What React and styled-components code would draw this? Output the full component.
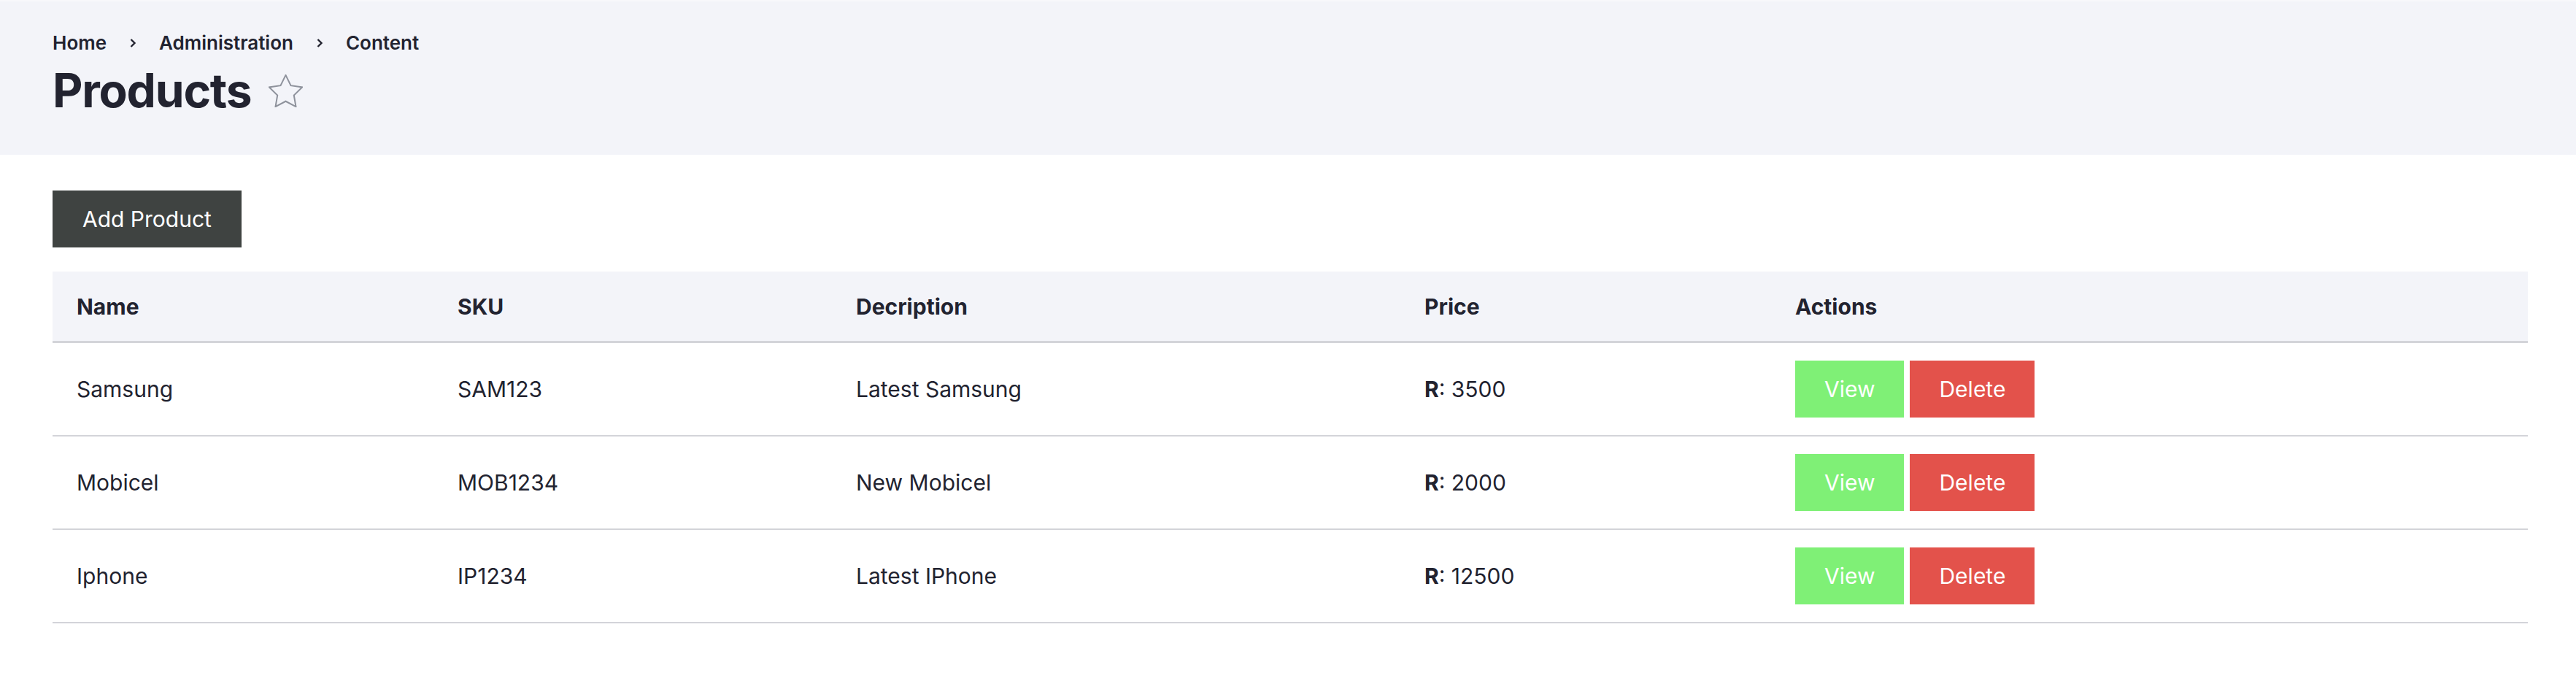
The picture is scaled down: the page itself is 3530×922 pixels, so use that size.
import styled, { createGlobalStyle } from "styled-components";

const GlobalStyle = createGlobalStyle`
  html, body {
    margin: 0;
    padding: 0;
    background: #ffffff;
    font-family: Inter, "Noto Sans", sans-serif;
    color: #222330;
  }
`;

const products = [
  { id: 1, name: "Samsung", sku: "SAM123", description: "Latest Samsung", price: 3500 },
  { id: 2, name: "Mobicel", sku: "MOB1234", description: "New Mobicel", price: 2000 },
  { id: 3, name: "Iphone", sku: "IP1234", description: "Latest IPhone", price: 12500 },
];

const columns = [
  { key: "name", label: "Name", width: 522 },
  { key: "sku", label: "SKU", width: 546 },
  { key: "description", label: "Decription", width: 779 },
  { key: "price", label: "Price", width: 508 },
  { key: "actions", label: "Actions", width: 1037 },
];

const crumbs = ["Home", "Administration", "Content"];

const Chevron = () => (
  <svg width="10" height="14" viewBox="0 0 10 14" fill="none">
    <path d="M2.5 2L7.5 7L2.5 12" stroke="#222330" strokeWidth="2.4" />
  </svg>
);

const Star = () => (
  <svg width="47" height="45" viewBox="1.6 1.6 20.8 19.8" preserveAspectRatio="none">
    <polygon
      points="12,2 15.09,8.26 22,9.27 17,14.14 18.18,21.02 12,17.77 5.82,21.02 7,14.14 2,9.27 8.91,8.26"
      fill="none"
      stroke="#8e929c"
      strokeWidth="2"
      vectorEffect="non-scaling-stroke"
      strokeLinejoin="miter"
    />
  </svg>
);

const ProductsPage = () => {
  return (
    <Page>
      <GlobalStyle />
      <PageHeader>
        <Breadcrumb>
          {crumbs.map((crumb, i) => (
            <Crumb key={crumb}>
              {crumb}
              {i < crumbs.length - 1 && (
                <Separator>
                  <Chevron />
                </Separator>
              )}
            </Crumb>
          ))}
        </Breadcrumb>
        <TitleRow>
          <Title>Products</Title>
          <Star />
        </TitleRow>
      </PageHeader>
      <Content>
        <PrimaryButton type="button">Add Product</PrimaryButton>
        <Table>
          <colgroup>
            {columns.map((col) => (
              <col key={col.key} width={col.width} />
            ))}
          </colgroup>
          <thead>
            <tr>
              {columns.map((col) => (
                <HeadCell key={col.key}>{col.label}</HeadCell>
              ))}
            </tr>
          </thead>
          <tbody>
            {products.map((p) => (
              <Row key={p.id}>
                <Cell>{p.name}</Cell>
                <Cell>{p.sku}</Cell>
                <Cell>{p.description}</Cell>
                <Cell>
                  <b>R</b>: {p.price}
                </Cell>
                <Cell>
                  <Actions>
                    <ActionButton $variant="view">View</ActionButton>
                    <ActionButton $variant="delete">Delete</ActionButton>
                  </Actions>
                </Cell>
              </Row>
            ))}
          </tbody>
        </Table>
      </Content>
    </Page>
  );
};

const Page = styled.div`
  width: 100%;
  min-height: 922px;
  background: #ffffff;
`;

const PageHeader = styled.header`
  background: #f3f4f9;
  border-top: 2px solid #f8f8fb;
  padding: 39px 72px 48px;
`;

const Breadcrumb = styled.nav`
  display: flex;
  align-items: center;
  height: 36px;
  margin-bottom: 7px;
`;

const Crumb = styled.span`
  display: flex;
  align-items: center;
  font-size: 26px;
  line-height: 36px;
  font-weight: 600;
  color: #222330;
`;

const Separator = styled.span`
  display: flex;
  align-items: center;
  padding: 0 31px 0 31px;
`;

const TitleRow = styled.div`
  display: flex;
  align-items: center;
  gap: 24px;
  height: 80px;
`;

const Title = styled.h1`
  margin: 0;
  font-size: 64px;
  line-height: 80px;
  font-weight: 700;
  letter-spacing: -1.2px;
  color: #222330;
`;

const Content = styled.main`
  padding: 49px 66px 0 72px;
`;

const PrimaryButton = styled.button`
  display: block;
  height: 78px;
  padding: 0 41px;
  border: none;
  border-radius: 0;
  background: #3f4341;
  color: #ffffff;
  font-family: Inter, "Noto Sans", sans-serif;
  font-size: 30px;
  font-weight: 400;
  cursor: pointer;
`;

const Table = styled.table`
  width: 100%;
  margin-top: 33px;
  border-collapse: collapse;
  table-layout: fixed;
`;

const HeadCell = styled.th`
  height: 95px;
  padding: 0 33px;
  background: #f3f4f9;
  border-bottom: 3px solid #d3d4d9;
  text-align: left;
  font-size: 30px;
  font-weight: 700;
  color: #222330;
`;

const Row = styled.tr`
  border-bottom: 2px solid #d3d4d9;
`;

const Cell = styled.td`
  height: 126px;
  padding: 0 33px;
  font-size: 30px;
  font-weight: 400;
  color: #222330;
  b {
    font-weight: 700;
  }
`;

const Actions = styled.div`
  display: flex;
  gap: 8px;
`;

const ActionButton = styled.button`
  height: 78px;
  padding: 0 40px;
  border: none;
  border-radius: 0;
  background: ${(p) => (p.$variant === "delete" ? "#e3524b" : "#7ff076")};
  color: #ffffff;
  font-family: Inter, "Noto Sans", sans-serif;
  font-size: 30px;
  cursor: pointer;
`;

export default ProductsPage;
